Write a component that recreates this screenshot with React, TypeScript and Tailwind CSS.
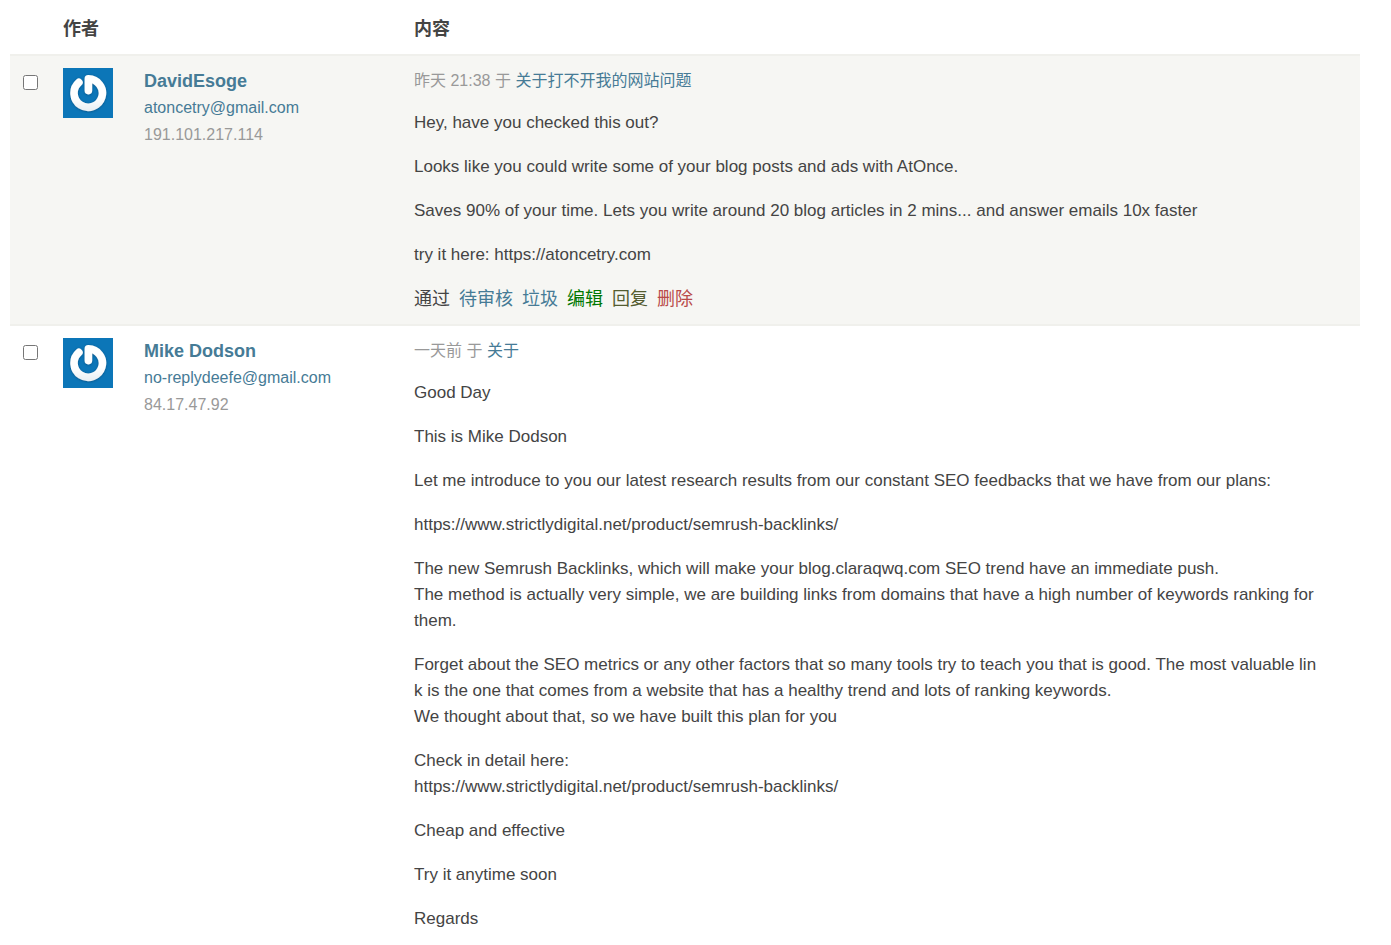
import { ReactNode } from "react";
import clsx from "clsx";

type Action = {
  label: string;
  className: string;
};

type Comment = {
  id: number;
  author: string;
  email: string;
  ip: string;
  date: string;
  post: string;
  paragraphs: string[][];
  actions?: Action[];
};

const COMMENT_ACTIONS: Action[] = [
  { label: "通过", className: "text-[#444444]" },
  { label: "待审核", className: "text-[#467b96]" },
  { label: "垃圾", className: "text-[#467b96]" },
  { label: "编辑", className: "text-[#007700]" },
  { label: "回复", className: "text-[#545c30]" },
  { label: "删除", className: "text-[#b94a48]" },
];

const COMMENTS: Comment[] = [
  {
    id: 1,
    author: "DavidEsoge",
    email: "atoncetry@gmail.com",
    ip: "191.101.217.114",
    date: "昨天 21:38",
    post: "关于打不开我的网站问题",
    paragraphs: [
      ["Hey, have you checked this out?"],
      [
        "Looks like you could write some of your blog posts and ads with AtOnce.",
      ],
      [
        "Saves 90% of your time. Lets you write around 20 blog articles in 2 mins... and answer emails 10x faster",
      ],
      ["try it here: https://atoncetry.com"],
    ],
    actions: COMMENT_ACTIONS,
  },
  {
    id: 2,
    author: "Mike Dodson",
    email: "no-replydeefe@gmail.com",
    ip: "84.17.47.92",
    date: "一天前",
    post: "关于",
    paragraphs: [
      ["Good Day"],
      ["This is Mike Dodson"],
      [
        "Let me introduce to you our latest research results from our constant SEO feedbacks that we have from our plans:",
      ],
      ["https://www.strictlydigital.net/product/semrush-backlinks/"],
      [
        "The new Semrush Backlinks, which will make your blog.claraqwq.com SEO trend have an immediate push.",
        "The method is actually very simple, we are building links from domains that have a high number of keywords ranking for",
        "them.",
      ],
      [
        "Forget about the SEO metrics or any other factors that so many tools try to teach you that is good. The most valuable lin",
        "k is the one that comes from a website that has a healthy trend and lots of ranking keywords.",
        "We thought about that, so we have built this plan for you",
      ],
      [
        "Check in detail here:",
        "https://www.strictlydigital.net/product/semrush-backlinks/",
      ],
      ["Cheap and effective"],
      ["Try it anytime soon"],
      ["Regards"],
    ],
  },
];

function Avatar({ id, name }: { id: number; name: string }) {
  return (
    <svg
      viewBox="0 0 50 50"
      className="block size-[50px]"
      role="img"
      aria-label={name}
    >
      <defs>
        <filter id={`shade-${id}`} x="-20%" y="-20%" width="140%" height="140%">
          <feGaussianBlur in="SourceGraphic" stdDeviation="0.35" result="soft" />
          <feDropShadow
            in="soft"
            dx="0"
            dy="0.5"
            stdDeviation="0.8"
            floodColor="#04395f"
            floodOpacity="0.6"
          />
        </filter>
        <linearGradient
          id={`ring-${id}`}
          gradientUnits="userSpaceOnUse"
          x1="0"
          y1="8"
          x2="0"
          y2="44"
        >
          <stop offset="0.6" stopColor="#ffffff" />
          <stop offset="1" stopColor="#e6edf2" />
        </linearGradient>
      </defs>
      <rect width="50" height="50" fill="#0c76b8" />
      <path
        d="M15.9 14.4A14.2 14.2 0 1 0 25.4 10.9V22.6"
        fill="none"
        stroke={`url(#ring-${id})`}
        strokeWidth="7.6"
        strokeLinecap="round"
        strokeLinejoin="round"
        filter={`url(#shade-${id})`}
      />
    </svg>
  );
}

function HeadCell({
  colSpan,
  children,
}: {
  colSpan?: number;
  children?: ReactNode;
}) {
  return (
    <th
      colSpan={colSpan}
      className="px-[13px] pt-4 pb-3 text-left font-bold"
    >
      {children}
    </th>
  );
}

function CommentRow({ comment, odd }: { comment: Comment; odd: boolean }) {
  const { id, author, email, ip, date, post, paragraphs, actions } = comment;

  return (
    <tr
      className={clsx(
        "border-t-2 border-[#f0f0ec] align-top",
        odd && "bg-[#f6f6f3]",
      )}
    >
      <td className="py-3 pl-[13px]">
        <input
          type="checkbox"
          aria-label={author}
          className="mt-[7px] block size-[15px]"
        />
      </td>
      <td className="px-[13px] py-3">
        <Avatar id={id} name={author} />
      </td>
      <td className="px-[13px] py-3">
        <a href="#author" className="block font-bold text-[#467b96]">
          {author}
        </a>
        <a
          href={`mailto:${email}`}
          className="block text-[16px] leading-7 text-[#467b96]"
        >
          {email}
        </a>
        <span className="block text-[16px] text-[#999999]">{ip}</span>
      </td>
      <td className="px-[13px] py-3">
        <div className="pt-[2px] text-[16px] leading-[22px] text-[#999999]">
          {date} 于{" "}
          <a href="#post" className="text-[#467b96]">
            {post}
          </a>
        </div>
        {paragraphs.map((lines, i) => (
          <p key={i} className="mt-[18px] text-[17px] break-all">
            {lines.map((line) => (
              <span key={line} className="block">
                {line}
              </span>
            ))}
          </p>
        ))}
        {actions && (
          <div className="mt-[18px] flex gap-[9px]">
            {actions.map(({ label, className }) => (
              <a key={label} href="#action" className={className}>
                {label}
              </a>
            ))}
          </div>
        )}
      </td>
    </tr>
  );
}

export default function App() {
  return (
    <main className="bg-white pr-[31px] pl-[10px] font-['Liberation_Sans','Noto_Sans_CJK_SC',sans-serif] text-[18px] leading-[26px] text-[#444444]">
      <table className="w-full table-fixed border-collapse">
        <colgroup>
          <col className="w-[40px]" />
          <col className="w-[81px]" />
          <col className="w-1/5" />
          <col />
        </colgroup>
        <thead>
          <tr>
            <HeadCell />
            <HeadCell colSpan={2}>作者</HeadCell>
            <HeadCell>内容</HeadCell>
          </tr>
        </thead>
        <tbody>
          {COMMENTS.map((comment, i) => (
            <CommentRow
              key={comment.id}
              comment={comment}
              odd={i % 2 === 0}
            />
          ))}
        </tbody>
      </table>
    </main>
  );
}
